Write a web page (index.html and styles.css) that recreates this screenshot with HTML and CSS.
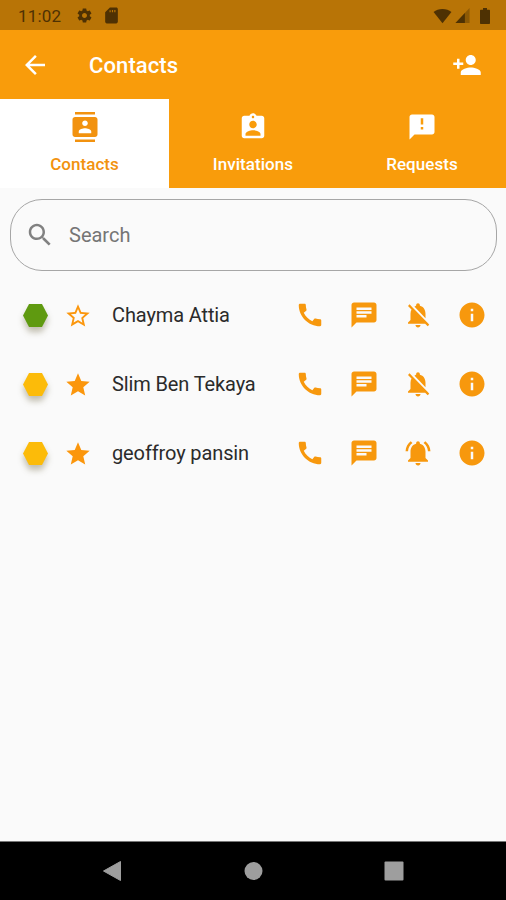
FILE: index.html
```html
<!DOCTYPE html>
<html lang="en">
<head>
<meta charset="utf-8">
<title>Contacts</title>
<link rel="stylesheet" href="styles.css">
</head>
<body>
<svg class="defs" aria-hidden="true">
  <symbol id="call" viewBox="0 0 24 24"><path d="M20.01 15.38c-1.23 0-2.42-.2-3.53-.56-.35-.12-.74-.03-1.01.24l-1.57 1.97c-2.83-1.35-5.48-3.9-6.89-6.83l1.95-1.66c.27-.28.35-.67.24-1.02-.37-1.11-.56-2.3-.56-3.53 0-.54-.45-.99-.99-.99H4.19C3.65 3 3 3.24 3 3.99 3 13.28 10.73 21 20.01 21c.71 0 .99-.63.99-1.18v-3.45c0-.54-.45-.99-.99-.99z"/></symbol>
  <symbol id="chat" viewBox="0 0 24 24"><path d="M20 2H4c-1.100 0-1.990.9-1.990 2L2 22l4-4h14c1.100 0 2-.9 2-2V4c0-1.100-.9-2-2-2zM6 9h12v2H6V9zm8 5H6v-2h8v2zm4-6H6V6h12v2z"/></symbol>
  <symbol id="bell-off" viewBox="0 0 24 24"><path d="M20 18.690L7.840 6.140 5.270 3.490 4 4.760l2.800 2.800v.01c-.52.99-.8 2.160-.8 3.420v5l-2 2v1h13.730l2 2L21 19.720l-1-1.030zM12 22c1.110 0 2-.89 2-2h-4c0 1.110.89 2 2 2zm6-7.320V11c0-3.080-1.640-5.640-4.500-6.320V4c0-.83-.67-1.500-1.500-1.500s-1.500.67-1.500 1.500v.68c-.15.03-.29.08-.42.12-.1.03-.2.07-.3.11h-.01c-.01 0-.01 0-.02.01-.23.090-.46.2-.68.310 0 0-.01 0-.01.01L18 14.680z"/></symbol>
  <symbol id="bell-on" viewBox="0 0 24 24"><path d="M7.580 4.080L6.150 2.650C3.750 4.480 2.170 7.300 2.030 10.500h2c.15-2.650 1.510-4.970 3.550-6.420zm12.390 6.420h2c-.15-3.200-1.730-6.020-4.120-7.850l-1.420 1.430c2.020 1.450 3.390 3.770 3.540 6.420zM18 11c0-3.070-1.640-5.640-4.500-6.320V4c0-.83-.67-1.500-1.500-1.500s-1.500.67-1.500 1.500v.68C7.630 5.360 6 7.920 6 11v5l-2 2v1h16v-1l-2-2v-5zm-6 11c.14 0 .27-.01.4-.04.65-.14 1.180-.58 1.440-1.180.1-.24.15-.5.15-.78h-4c.01 1.100.9 2 2.010 2z"/></symbol>
  <symbol id="info" viewBox="0 0 24 24"><path d="M12 2C6.480 2 2 6.480 2 12s4.480 10 10 10 10-4.480 10-10S17.520 2 12 2zm1 15h-2v-6h2v6zm0-8h-2V7h2v2z"/></symbol>
  <symbol id="star" viewBox="0 0 24 24"><path d="M12 17.270L18.180 21l-1.640-7.030L22 9.240l-7.190-.61L12 2 9.190 8.630 2 9.240l5.460 4.730L5.820 21z"/></symbol>
  <symbol id="star-line" viewBox="0 0 24 24"><path d="M22 9.240l-7.190-.62L12 2 9.190 8.630 2 9.240l5.460 4.730L5.820 21 12 17.270 18.180 21l-1.630-7.030L22 9.240zM12 15.400l-3.760 2.270 1-4.280-3.320-2.880 4.380-.38L12 6.100l1.710 4.040 4.380.38-3.320 2.880 1 4.280L12 15.400z"/></symbol>
</svg>
<div class="screen">
  <div class="status">
    <span class="clock">11:02</span>
    <svg class="s-gear" viewBox="0 0 24 24"><path d="M19.430 12.980c.04-.32.07-.64.07-.98s-.03-.66-.07-.98l2.110-1.650c.19-.15.24-.42.12-.64l-2-3.460c-.12-.22-.39-.3-.61-.22l-2.490 1c-.52-.4-1.080-.73-1.690-.98l-.38-2.650C14.460 2.180 14.250 2 14 2h-4c-.25 0-.46.18-.49.42l-.38 2.650c-.61.25-1.170.59-1.690.98l-2.490-1c-.23-.09-.49 0-.61.22l-2 3.460c-.13.22-.07.49.12.64l2.110 1.650c-.04.32-.07.65-.07.98s.03.66.07.98l-2.110 1.650c-.19.15-.24.42-.12.64l2 3.460c.12.22.39.3.61.22l2.490-1c.52.4 1.080.73 1.690.98l.38 2.650c.03.24.24.42.49.42h4c.25 0 .46-.18.49-.42l.38-2.650c.61-.25 1.170-.59 1.690-.98l2.490 1c.23.09.49 0 .61-.22l2-3.460c.12-.22.07-.49-.12-.64l-2.110-1.650zM12 15.500c-1.930 0-3.500-1.570-3.500-3.500s1.570-3.500 3.500-3.500 3.500 1.570 3.500 3.500-1.570 3.500-3.500 3.500z"/></svg>
    <svg class="s-sd" viewBox="0 0 24 24"><path fill-rule="evenodd" d="M18 2h-8L4 8v12c0 1.100.9 2 2 2h12c1.100 0 2-.9 2-2V4c0-1.100-.9-2-2-2zM9.500 5.500h1.500V8H9.500zM12.500 5H14v3h-1.500zM15.500 5H17v3h-1.500z"/></svg>
    <span class="grow"></span>
    <svg class="s-wifi" viewBox="0 0 20 16"><path d="M10 15.500L.6 3.700C3 1.700 6.300.6 10 .6s7 1.100 9.400 3.100z"/></svg>
    <svg class="s-cell" viewBox="0 0 15 16"><path opacity=".4" d="M15 0v16H0z"/><path d="M10 5.300V16H0z"/></svg>
    <svg class="s-batt" viewBox="0 0 10 16"><path d="M9 1.800H7V0H3v1.800H1c-.6 0-1 .4-1 1V15c0 .6.400 1 1 1h8c.6 0 1-.4 1-1V2.800c0-.6-.4-1-1-1z"/></svg>
  </div>
  <header class="bar">
    <svg class="back" viewBox="0 0 24 24"><path d="M20 11H7.830l5.590-5.590L12 4l-8 8 8 8 1.410-1.410L7.830 13H20v-2z"/></svg>
    <h1>Contacts</h1>
    <span class="grow"></span>
    <svg class="add" viewBox="0 0 24 24"><path d="M15 12c2.210 0 4-1.790 4-4s-1.790-4-4-4-4 1.790-4 4 1.790 4 4 4zm-9-2V7H4v3H1v2h3v3h2v-3h3v-2H6zm9 4c-2.670 0-8 1.340-8 4v2h16v-2c0-2.660-5.330-4-8-4z"/></svg>
  </header>
  <nav class="tabs">
    <div class="tab active">
      <svg viewBox="0 0 24 24"><path d="M20 0H4v2h16V0zM4 24h16v-2H4v2zM20 4H4c-1.100 0-2 .9-2 2v12c0 1.100.9 2 2 2h16c1.100 0 2-.9 2-2V6c0-1.100-.9-2-2-2zm-8 2.750c1.240 0 2.250 1.010 2.250 2.250s-1.010 2.250-2.250 2.250S9.750 10.240 9.750 9 10.760 6.750 12 6.750zM17 17H7v-1.500c0-1.670 3.330-2.500 5-2.500s5 .83 5 2.500V17z"/></svg>
      <span>Contacts</span>
    </div>
    <div class="tab">
      <svg viewBox="0 0 24 24"><path d="M19 3h-4.180C14.400 1.840 13.300 1 12 1s-2.400.84-2.820 2H5c-1.100 0-2 .9-2 2v14c0 1.100.9 2 2 2h14c1.100 0 2-.9 2-2V5c0-1.100-.9-2-2-2zm-7 0c.55 0 1 .45 1 1s-.45 1-1 1-1-.45-1-1 .45-1 1-1zm0 4c1.660 0 3 1.340 3 3s-1.340 3-3 3-3-1.340-3-3 1.340-3 3-3zm6 12H6v-1.400c0-2 4-3.100 6-3.100s6 1.100 6 3.100V19z"/></svg>
      <span>Invitations</span>
    </div>
    <div class="tab">
      <svg viewBox="0 0 24 24"><path d="M20 2H4c-1.100 0-1.990.9-1.990 2L2 22l4-4h14c1.100 0 2-.9 2-2V4c0-1.100-.9-2-2-2zm-7 12h-2v-2h2v2zm0-4h-2V5h2v5z"/></svg>
      <span>Requests</span>
    </div>
  </nav>
  <main>
    <div class="search">
      <svg viewBox="0 0 24 24"><path d="M15.500 14h-.79l-.28-.27C15.410 12.590 16 11.110 16 9.500 16 5.910 13.090 3 9.500 3S3 5.910 3 9.500 5.910 16 9.500 16c1.610 0 3.090-.59 4.230-1.570l.27.28v.79l5 4.990L20.490 19l-4.990-5zm-6 0C7.010 14 5 11.990 5 9.500S7.010 5 9.500 5 14 7.010 14 9.500 11.990 14 9.500 14z"/></svg>
      <span>Search</span>
    </div>
    <ul class="list">
      <li class="row">
        <span class="presence"><i class="hex online"></i></span>
        <svg class="fav"><use href="#star-line"/></svg>
        <span class="name">Chayma Attia</span>
        <svg><use href="#call"/></svg><svg><use href="#chat"/></svg><svg><use href="#bell-off"/></svg><svg><use href="#info"/></svg>
      </li>
      <li class="row">
        <span class="presence"><i class="hex away"></i></span>
        <svg class="fav"><use href="#star"/></svg>
        <span class="name">Slim Ben Tekaya</span>
        <svg><use href="#call"/></svg><svg><use href="#chat"/></svg><svg><use href="#bell-off"/></svg><svg><use href="#info"/></svg>
      </li>
      <li class="row">
        <span class="presence"><i class="hex away"></i></span>
        <svg class="fav"><use href="#star"/></svg>
        <span class="name">geoffroy pansin</span>
        <svg><use href="#call"/></svg><svg><use href="#chat"/></svg><svg><use href="#bell-on"/></svg><svg><use href="#info"/></svg>
      </li>
    </ul>
  </main>
  <footer class="navbar">
    <svg viewBox="0 0 20 22"><path d="M18.500 1.500v19L1.500 11z" stroke="#9e9e9e" stroke-linejoin="round"/></svg>
    <svg viewBox="0 0 20 22"><circle cx="10.500" cy="11" r="9"/></svg>
    <svg viewBox="0 0 20 22"><rect x=".5" y="1.500" width="19" height="19" rx="1"/></svg>
  </footer>
</div>
</body>
</html>
```
FILE: styles.css
```css
* { box-sizing: border-box; }
body { margin: 0; font-family: Roboto, "Liberation Sans", sans-serif; background: #fafafa; }
svg { display: block; fill: currentColor; flex: none; }
.defs { display: none; }
.grow { flex: 1; }
.screen { width: 506px; height: 900px; display: flex; flex-direction: column; overflow: hidden; }

.status { height: 30px; background: #b87406; color: #4e3103; display: flex; align-items: center; padding: 1px 16px 0 18px; }
.clock { font-size: 17px; letter-spacing: 0.2px; width: 58px; }
.s-gear { width: 17px; height: 17px; }
.s-sd { width: 19px; height: 19px; margin-left: 9px; }
.s-wifi { width: 19px; height: 16px; }
.s-cell { width: 15px; height: 15px; margin-left: 3px; }
.s-batt { width: 10px; height: 16px; margin-left: 10px; }

.bar { height: 69px; background: #f99c0b; color: #fff; display: flex; align-items: center; padding: 0 24px 0 20px; }
.back { width: 30px; height: 30px; }
h1 { margin: 2px 0 0 39px; font-size: 22px; font-weight: 500; line-height: 30px; letter-spacing: 0.1px; }
.add { width: 30px; height: 30px; }

.tabs { height: 89px; display: grid; grid-template-columns: 169px 168px 169px; background: #f99c0b; color: #fff; }
.tab { display: flex; flex-direction: column; align-items: center; padding-top: 13px; }
.tab svg { width: 30px; height: 30px; }
.tab span { margin-top: 12px; font-size: 17px; line-height: 20px; font-weight: 500; letter-spacing: 0.05px; }
.tab:last-child { padding-left: 1px; }
.active { background: #fff; color: #f2920f; }

main { flex: 1; background: #fafafa; padding: 11px 9px 0 10px; }
.search { height: 72px; border: 1px solid #a6a6a6; border-radius: 32px; display: flex; align-items: center; padding-left: 14px; color: #757575; }
.search svg { width: 30px; height: 30px; color: #818181; }
.search span { margin-left: 14px; font-size: 20px; }

.list { list-style: none; margin: 10px 0 0; padding: 0; }
.row { height: 69px; display: flex; align-items: center; gap: 24px; padding-left: 13px; padding-right: 10px; color: #f7980d; }
.presence { display: flex; width: 25px; filter: drop-shadow(0 5px 3px rgba(60, 50, 0, 0.3)); }
.hex { width: 25px; height: 23px; clip-path: polygon(24% 0, 76% 0, 100% 50%, 76% 100%, 24% 100%, 0 50%); }
.online { background: #5f9a10; }
.away { background: #fcbb09; }
.row svg { width: 30px; height: 30px; margin-top: -1px; }
.row .fav { width: 28px; height: 28px; margin-left: -8px; margin-top: 0; color: #fb960c; }
.name { flex: 1; margin: -1px 0 0 -4px; font-size: 20px; line-height: 24px; letter-spacing: -0.12px; color: #2b2b2b; white-space: nowrap; }

.navbar { height: 59px; background: #000; border-top: 1px solid #777; color: #9e9e9e; display: flex; align-items: center; justify-content: space-between; padding: 0 102px; }
.navbar svg { width: 20px; height: 22px; }
```
